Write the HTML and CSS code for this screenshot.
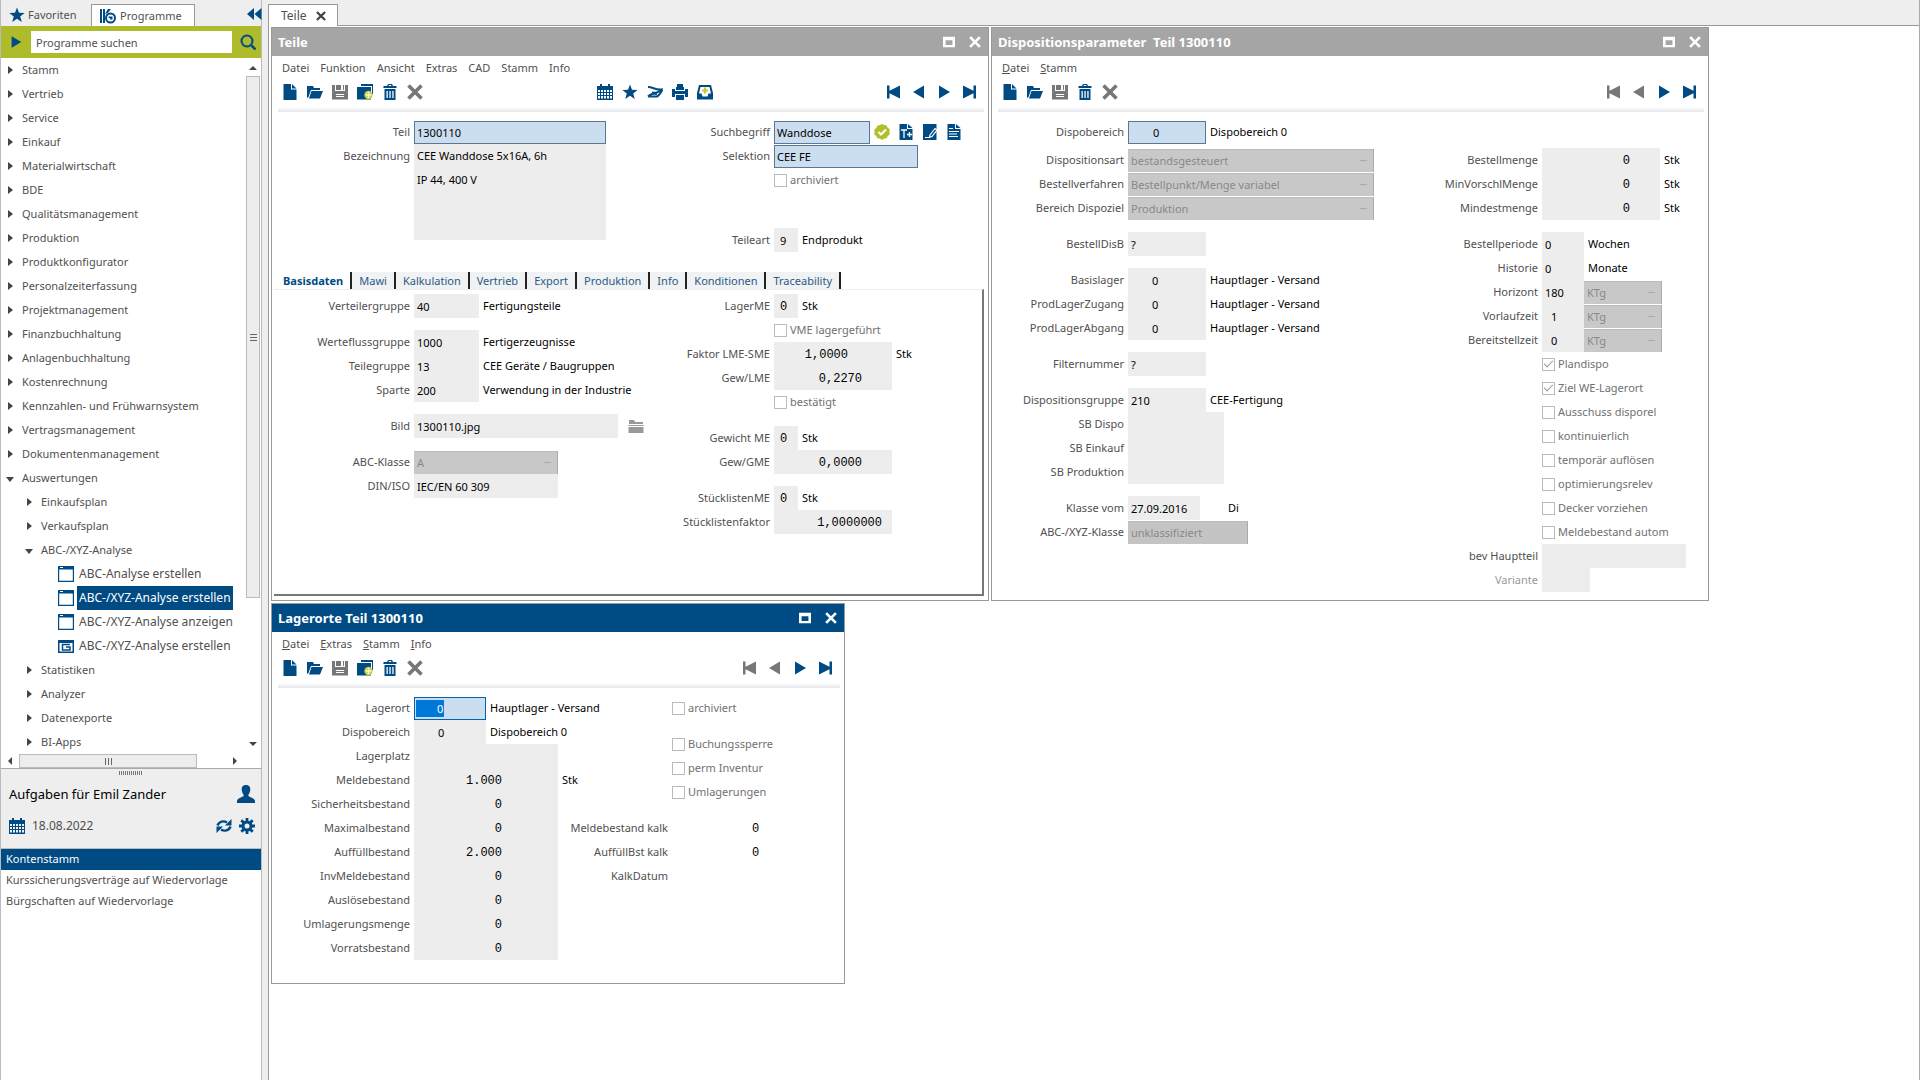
FILE: index.html
```html
<!DOCTYPE html>
<html lang="de">
<head>
<meta charset="utf-8">
<title>Teile</title>
<link rel="stylesheet" href="styles.css">
</head>
<body>
<svg class="sprite" aria-hidden="true">
  <symbol id="star" viewBox="0 0 16 16"><path d="M8 0.5l2 5.3 5.6.1-4.4 3.5 1.6 5.6L8 11.8 3.2 15l1.6-5.6L.4 5.9 6 5.8z"/></symbol>
  <symbol id="logo" viewBox="0 0 16 16"><path d="M0 1h2v14H0zM3 1h2v14H3zM5 6l3-5h3L8 5z"/><circle cx="10.500" cy="10" r="4.500" fill="none" stroke="currentColor" stroke-width="2"/><path d="M8.500 8.500h4v3h-2.500v-1.500H8.500z"/></symbol>
  <symbol id="rewind" viewBox="0 0 16 16"><path d="M8 2v12L1 8zM15.500 2v12l-7-6z"/></symbol>
  <symbol id="search" viewBox="0 0 16 16"><path d="M11.500 11.500L15.500 15.500" stroke="currentColor" stroke-width="2.500"/><circle cx="7" cy="7" r="5.500" fill="none" stroke="currentColor" stroke-width="2"/></symbol>
  <symbol id="doc" viewBox="0 0 16 16"><path d="M1.500 0H9v5.500h5.500V16h-13zM10 0l4.500 4.500H10z"/></symbol>
  <symbol id="open" viewBox="0 0 16 16"><path d="M0 2h6l1 2h6v2H4L1.500 13 0 14zM4.500 7H16l-3 7.500H2z"/></symbol>
  <symbol id="save" viewBox="0 0 16 16"><path fill-rule="evenodd" d="M0 1h3v6h10V1h3v14.500H0zM4 10h8v1H4zM4 12h8v1H4zM4 1h5v5H4zM11 1h1v5h-1z"/></symbol>
  <symbol id="copy" viewBox="0 0 16 16"><path d="M4 0h12v10h-1V2H4zM0 3h14v12.500H0z"/><circle cx="11.500" cy="11" r="4.200" fill="#c9d24e"/><path d="M11.500 8v6M8.500 11h6" stroke="#f4f6c8" stroke-width="1.500"/></symbol>
  <symbol id="trash" viewBox="0 0 16 16"><path fill-rule="evenodd" d="M1.500 2H5l1-2h4l1 2h3.500v2h-13zM6.500 2h3L9 1H7zM2.500 5h11v11h-11zM4.500 7v7h1.300V7zM7.400 7v7h1.300V7zM10.300 7v7h1.300V7z"/></symbol>
  <symbol id="cross" viewBox="0 0 16 16"><path d="M1.500 1.500l13 13M14.500 1.500l-13 13" stroke="currentColor" stroke-width="3.600"/></symbol>
  <symbol id="calendar" viewBox="0 0 16 16"><path fill-rule="evenodd" d="M0 2h3V0h2v2h6V0h2v2h3v14H0zM1 6v2h2V6zM4 6v2h2V6zM7 6v2h2V6zM10 6v2h2V6zM13 6v2h2V6zM1 9v2h2V9zM4 9v2h2V9zM7 9v2h2V9zM10 9v2h2V9zM13 9v2h2V9zM1 12v2.500h2V12zM4 12v2.500h2V12zM7 12v2.500h2V12zM10 12v2.500h2V12zM13 12v2.500h2V12z"/></symbol>
  <symbol id="flow" viewBox="0 0 16 16"><path d="M1 3c5 0 7 3 13 2.500C11 9 9 9 5 8.500M1 12.500h9c2-1 4-4 5.500-7M1 12.500c3-3 5-3 9-2.500" fill="none" stroke="currentColor" stroke-width="2"/></symbol>
  <symbol id="print" viewBox="0 0 16 16"><path d="M4 3h1V0h6v3h1v3H4zM0 5h3v2h10V5h3v8h-3v-3H3v3H0zM4 11h8v5H4z"/></symbol>
  <symbol id="inbox" viewBox="0 0 16 16"><path fill-rule="evenodd" d="M2 1h12l2 8v6.500H0V9zM3.500 3L2 9.500h2.500l1 3h5l1-3H14L12.500 3z"/><path d="M8 3.500v6M5 6.500h6" stroke="#c0ca3a" stroke-width="2"/></symbol>
  <symbol id="first" viewBox="0 0 16 16"><path d="M1 1.500h2.500v5.200L14 1.500v13L3.500 9.300v5.200H1z"/></symbol>
  <symbol id="prev" viewBox="0 0 16 16"><path d="M13 1.500v13L2 8z"/></symbol>
  <symbol id="next" viewBox="0 0 16 16"><path d="M3 1.500v13L14 8z"/></symbol>
  <symbol id="last" viewBox="0 0 16 16"><path d="M15 1.500h-2.500v5.200L2 1.500v13l10.500-5.200v5.200H15z"/></symbol>
  <symbol id="badge" viewBox="0 0 16 16"><path d="M8 0l2 1 2.500.3 1 2.200L15.500 5v3l.2 2.500-2 1.500-1 2.200-2.500.3L8 16l-2.200-1.500-2.500-.3-1-2.200-2-1.500L.5 8 .3 5.500l2-1.500 1-2.300L6 1z"/><path d="M4.500 8l2.500 2.500 5-5" fill="none" stroke="#fff" stroke-width="2"/></symbol>
  <symbol id="doctext" viewBox="0 0 16 16"><path d="M1.500 0H9v5h5.500v11h-13zM10 0l4.500 4H10z"/><path d="M3 6h6M6 6v8M9 10.500h5M11.500 8v5" stroke="#fff" stroke-width="1.300"/></symbol>
  <symbol id="edit" viewBox="0 0 16 16"><path d="M1 0h13.500v16H1z"/><path d="M8 11l5-6.500 2 1.500-5 6.500-2.500.8zM3 13.500h4" fill="none" stroke="#fff" stroke-width="1.200"/></symbol>
  <symbol id="doclines" viewBox="0 0 16 16"><path d="M1.500 0H9v5h5.500v11h-13zM10 0l4.500 4H10z"/><path d="M3 4.500h4M3 7.500h10M3 10h8M3 12.500h9" stroke="#fff"/></symbol>
  <symbol id="folder" viewBox="0 0 16 16"><path d="M1 2h5l1 2h8v2H1zM0 7h16l-.5 1H.5zM.5 9h15v6H.5z"/></symbol>
  <symbol id="win" viewBox="0 0 16 16"><path fill-rule="evenodd" d="M0 0h16v16H0zM1.200 3.500v11.300h13.600V3.500z"/><path d="M2 1.500h3" stroke="#fff"/></symbol>
  <symbol id="winplus" viewBox="0 0 16 16"><path fill-rule="evenodd" d="M0 2h16v13H0zM1.500 5v8.500h13V5z"/><path d="M12 6.500H4.500V12H12V9H8" fill="none" stroke="currentColor" stroke-width="1.500"/></symbol>
  <symbol id="user" viewBox="0 0 16 16"><path d="M8 0c3 0 4 2 3.800 4.500C11.600 7 10.500 8 10 9c0 2 5 1.500 6 5v2H0v-2c1-3.500 6-3 6-5-.5-1-1.600-2-1.800-4.500C4 2 5 0 8 0z"/></symbol>
  <symbol id="refresh" viewBox="0 0 16 16"><path d="M1.500 7.500C3 3 8 2.500 11 4.500M14.500 8.500C13 13 8 13.500 5 11.500" fill="none" stroke="currentColor" stroke-width="2.400"/><path d="M15.500 1v6.500H9zM.5 15V8.500H7z"/></symbol>
  <symbol id="gear" viewBox="0 0 16 16"><path d="M8 0v16M0 8h16M2.300 2.300l11.400 11.400M13.700 2.300L2.300 13.700" stroke="currentColor" stroke-width="2.800"/><circle cx="8" cy="8" r="4" fill="none" stroke="currentColor" stroke-width="3"/><circle cx="8" cy="8" r="2.500" fill="#eee"/></symbol>
  <symbol id="max" viewBox="0 0 14 14"><path fill-rule="evenodd" d="M0 1h14v12H0zM3 5v5.500h8V5z"/></symbol>
</svg>

<div class="app">
  <aside class="sidebar">
    <div class="side-tabs">
      <button class="side-tab"><svg class="ico"><use href="#star"/></svg>Favoriten</button>
      <button class="side-tab active"><svg class="ico"><use href="#logo"/></svg>Programme</button>
      <button class="collapse" aria-label="Einklappen"><svg class="ico"><use href="#rewind"/></svg></button>
    </div>
    <form class="search">
      <button type="button" aria-label="Start"><svg class="ico s14"><use href="#next"/></svg></button>
      <input type="text" aria-label="Programme suchen" placeholder="Programme suchen">
      <button type="button" aria-label="Suchen"><svg class="ico"><use href="#search"/></svg></button>
    </form>
    <div class="tree-box">
      <ul class="tree">
        <li>Stamm</li>
        <li>Vertrieb</li>
        <li>Service</li>
        <li>Einkauf</li>
        <li>Materialwirtschaft</li>
        <li>BDE</li>
        <li>Qualitätsmanagement</li>
        <li>Produktion</li>
        <li>Produktkonfigurator</li>
        <li>Personalzeiterfassung</li>
        <li>Projektmanagement</li>
        <li>Finanzbuchhaltung</li>
        <li>Anlagenbuchhaltung</li>
        <li>Kostenrechnung</li>
        <li>Kennzahlen- und Frühwarnsystem</li>
        <li>Vertragsmanagement</li>
        <li>Dokumentenmanagement</li>
        <li class="expanded">Auswertungen
          <ul>
            <li>Einkaufsplan</li>
            <li>Verkaufsplan</li>
            <li class="expanded">ABC-/XYZ-Analyse
              <ul class="leaves">
                <li><svg class="ico"><use href="#win"/></svg><span>ABC-Analyse erstellen</span></li>
                <li><svg class="ico"><use href="#win"/></svg><span class="selected">ABC-/XYZ-Analyse erstellen</span></li>
                <li><svg class="ico"><use href="#win"/></svg><span>ABC-/XYZ-Analyse anzeigen</span></li>
                <li><svg class="ico"><use href="#winplus"/></svg><span>ABC-/XYZ-Analyse erstellen</span></li>
              </ul>
            </li>
            <li>Statistiken</li>
            <li>Analyzer</li>
            <li>Datenexporte</li>
            <li>BI-Apps</li>
          </ul>
        </li>
      </ul>
      <div class="vscroll"><i class="up"></i><div class="thumb"><i class="grip"></i></div><i class="down"></i></div>
    </div>
    <div class="hscroll"><i class="left"></i><div class="thumb"><i class="grip"></i></div><i class="right"></i></div>
    <div class="splitter"><i></i></div>
    <section class="tasks">
      <header><h2>Aufgaben für Emil Zander</h2><svg class="ico s18"><use href="#user"/></svg></header>
      <div class="date"><svg class="ico"><use href="#calendar"/></svg><time>18.08.2022</time>
        <button aria-label="Aktualisieren"><svg class="ico"><use href="#refresh"/></svg></button>
        <button aria-label="Einstellungen"><svg class="ico"><use href="#gear"/></svg></button></div>
    </section>
    <ul class="task-list">
      <li class="selected">Kontenstamm</li>
      <li>Kurssicherungsverträge auf Wiedervorlage</li>
      <li>Bürgschaften auf Wiedervorlage</li>
    </ul>
  </aside>

  <main class="workspace">
    <div class="main-tabs"><button class="main-tab">Teile <svg class="ico s10"><use href="#cross"/></svg></button></div>
    <div class="desktop">

      <section class="window w-teile">
        <header class="titlebar"><h1>Teile</h1><button aria-label="Maximieren"><svg class="ico s14"><use href="#max"/></svg></button><button aria-label="Schließen"><svg class="ico s14"><use href="#cross"/></svg></button></header>
        <nav class="menu"><button>Datei</button><button>Funktion</button><button>Ansicht</button><button>Extras</button><button>CAD</button><button>Stamm</button><button>Info</button></nav>
        <div class="toolbar">
          <div class="tools">
            <button aria-label="Neu"><svg class="ico"><use href="#doc"/></svg></button>
            <button aria-label="Öffnen"><svg class="ico"><use href="#open"/></svg></button>
            <button aria-label="Speichern" disabled><svg class="ico"><use href="#save"/></svg></button>
            <button aria-label="Kopieren"><svg class="ico"><use href="#copy"/></svg></button>
            <button aria-label="Löschen"><svg class="ico"><use href="#trash"/></svg></button>
            <button aria-label="Abbrechen" disabled><svg class="ico"><use href="#cross"/></svg></button>
          </div>
          <div class="tools">
            <button aria-label="Kalender"><svg class="ico"><use href="#calendar"/></svg></button>
            <button aria-label="Favorit"><svg class="ico"><use href="#star"/></svg></button>
            <button aria-label="Workflow"><svg class="ico"><use href="#flow"/></svg></button>
            <button aria-label="Drucken"><svg class="ico"><use href="#print"/></svg></button>
            <button aria-label="Ablage"><svg class="ico"><use href="#inbox"/></svg></button>
          </div>
          <div class="tools">
            <button aria-label="Erster"><svg class="ico"><use href="#first"/></svg></button>
            <button aria-label="Voriger"><svg class="ico"><use href="#prev"/></svg></button>
            <button aria-label="Nächster"><svg class="ico"><use href="#next"/></svg></button>
            <button aria-label="Letzter"><svg class="ico"><use href="#last"/></svg></button>
          </div>
        </div>
        <div class="form head">
          <div class="col">
            <div class="row"><label for="teil">Teil</label><input id="teil" class="key f192" value="1300110"></div>
            <div class="row tall"><label for="bez">Bezeichnung</label><textarea id="bez" class="f192" readonly>CEE Wanddose 5x16A, 6h
IP 44, 400 V</textarea></div>
          </div>
          <div class="col">
            <div class="row"><label for="such">Suchbegriff</label><input id="such" class="key f96" value="Wanddose"><span class="field-icons"><svg class="ico lime"><use href="#badge"/></svg><svg class="ico"><use href="#doctext"/></svg><svg class="ico"><use href="#edit"/></svg><svg class="ico"><use href="#doclines"/></svg></span></div>
            <div class="row"><label for="sel">Selektion</label><input id="sel" class="key f144" value="CEE FE"></div>
            <div class="row check"><input type="checkbox" id="arch" disabled><label for="arch">archiviert</label></div>
            <div class="row after-empty"><label for="art">Teileart</label><input id="art" class="f24" value="9" readonly><output>Endprodukt</output></div>
          </div>
        </div>
        <div class="tabs" role="tablist">
          <button role="tab" aria-selected="true">Basisdaten</button><button role="tab">Mawi</button><button role="tab">Kalkulation</button><button role="tab">Vertrieb</button><button role="tab">Export</button><button role="tab">Produktion</button><button role="tab">Info</button><button role="tab">Konditionen</button><button role="tab">Traceability</button>
        </div>
        <div class="form tab-panel">
          <div class="col">
            <div class="row"><label for="vg">Verteilergruppe</label><input id="vg" class="f64" value="40" readonly><output>Fertigungsteile</output></div>
            <div class="row gap"><label for="wg">Werteflussgruppe</label><input id="wg" class="f64" value="1000" readonly><output>Fertigerzeugnisse</output></div>
            <div class="row"><label for="tg">Teilegruppe</label><input id="tg" class="f64" value="13" readonly><output>CEE Geräte / Baugruppen</output></div>
            <div class="row"><label for="sp">Sparte</label><input id="sp" class="f64" value="200" readonly><output>Verwendung in der Industrie</output></div>
            <div class="row gap"><label for="bild">Bild</label><input id="bild" class="f204" value="1300110.jpg" readonly><button class="browse" aria-label="Bild wählen" disabled><svg class="ico"><use href="#folder"/></svg></button></div>
            <div class="row gap"><label for="abc">ABC-Klasse</label><select id="abc" class="f144" disabled><option>A</option></select></div>
            <div class="row"><label for="din">DIN/ISO</label><input id="din" class="f144" value="IEC/EN 60 309" readonly></div>
          </div>
          <div class="col">
            <div class="row"><label for="lme">LagerME</label><input id="lme" class="f24 mono" value="0" readonly><output>Stk</output></div>
            <div class="row check"><input type="checkbox" id="vme" disabled><label for="vme">VME lagergeführt</label></div>
            <div class="row"><label for="fak">Faktor LME-SME</label><input id="fak" class="f118 mono num in44" value="1,0000" readonly><output>Stk</output></div>
            <div class="row"><label for="glme">Gew/LME</label><input id="glme" class="f118 mono num in30" value="0,2270" readonly></div>
            <div class="row check"><input type="checkbox" id="best" disabled><label for="best">bestätigt</label></div>
            <div class="row gap"><label for="gme">Gewicht ME</label><input id="gme" class="f24 mono" value="0" readonly><output>Stk</output></div>
            <div class="row"><label for="ggme">Gew/GME</label><input id="ggme" class="f118 mono num in30" value="0,0000" readonly></div>
            <div class="row gap"><label for="sme">StücklistenME</label><input id="sme" class="f24 mono" value="0" readonly><output>Stk</output></div>
            <div class="row"><label for="sfak">Stücklistenfaktor</label><input id="sfak" class="f118 mono num in8" value="1,0000000" readonly></div>
          </div>
        </div>
      </section>

      <section class="window w-dispo">
        <header class="titlebar"><h1>Dispositionsparameter&nbsp; Teil 1300110</h1><button aria-label="Maximieren"><svg class="ico s14"><use href="#max"/></svg></button><button aria-label="Schließen"><svg class="ico s14"><use href="#cross"/></svg></button></header>
        <nav class="menu"><button><u>D</u>atei</button><button><u>S</u>tamm</button></nav>
        <div class="toolbar">
          <div class="tools">
            <button aria-label="Neu"><svg class="ico"><use href="#doc"/></svg></button>
            <button aria-label="Öffnen"><svg class="ico"><use href="#open"/></svg></button>
            <button aria-label="Speichern" disabled><svg class="ico"><use href="#save"/></svg></button>
            <button aria-label="Löschen"><svg class="ico"><use href="#trash"/></svg></button>
            <button aria-label="Abbrechen" disabled><svg class="ico"><use href="#cross"/></svg></button>
          </div>
          <div class="tools">
            <button aria-label="Erster" disabled><svg class="ico"><use href="#first"/></svg></button>
            <button aria-label="Voriger" disabled><svg class="ico"><use href="#prev"/></svg></button>
            <button aria-label="Nächster"><svg class="ico"><use href="#next"/></svg></button>
            <button aria-label="Letzter"><svg class="ico"><use href="#last"/></svg></button>
          </div>
        </div>
        <div class="form">
          <div class="col">
            <div class="row"><label for="db">Dispobereich</label><input id="db" class="key f78 lead" value="0"><output>Dispobereich 0</output></div>
            <div class="row nudge"><label for="da">Dispositionsart</label><select id="da" class="f246" disabled><option>bestandsgesteuert</option></select></div>
            <div class="row"><label for="bv">Bestellverfahren</label><select id="bv" class="f246" disabled><option>Bestellpunkt/Menge variabel</option></select></div>
            <div class="row"><label for="bd">Bereich Dispoziel</label><select id="bd" class="f246" disabled><option>Produktion</option></select></div>
            <div class="row gap"><label for="bdb">BestellDisB</label><input id="bdb" class="f78" value="?" readonly></div>
            <div class="row gap"><label for="bl">Basislager</label><input id="bl" class="f78 lead" value="0" readonly><output>Hauptlager - Versand</output></div>
            <div class="row"><label for="plz">ProdLagerZugang</label><input id="plz" class="f78 lead" value="0" readonly><output>Hauptlager - Versand</output></div>
            <div class="row"><label for="pla">ProdLagerAbgang</label><input id="pla" class="f78 lead" value="0" readonly><output>Hauptlager - Versand</output></div>
            <div class="row gap"><label for="fn">Filternummer</label><input id="fn" class="f78" value="?" readonly></div>
            <div class="row gap"><label for="dg">Dispositionsgruppe</label><input id="dg" class="f78" value="210" readonly><output>CEE-Fertigung</output></div>
            <div class="row"><label for="sbd">SB Dispo</label><input id="sbd" class="f96" readonly></div>
            <div class="row"><label for="sbe">SB Einkauf</label><input id="sbe" class="f96" readonly></div>
            <div class="row"><label for="sbp">SB Produktion</label><input id="sbp" class="f96" readonly></div>
            <div class="row gap"><label for="kv">Klasse vom</label><input id="kv" class="f72" value="27.09.2016" readonly><output class="far">Di</output></div>
            <div class="row"><label for="axk">ABC-/XYZ-Klasse</label><select id="axk" class="f120 plain" disabled><option>unklassifiziert</option></select></div>
          </div>
          <div class="col below-first">
            <div class="row"><label for="bm">Bestellmenge</label><input id="bm" class="f118 mono num in30" value="0" readonly><output>Stk</output></div>
            <div class="row"><label for="mvm">MinVorschlMenge</label><input id="mvm" class="f118 mono num in30" value="0" readonly><output>Stk</output></div>
            <div class="row"><label for="mm">Mindestmenge</label><input id="mm" class="f118 mono num in30" value="0" readonly><output>Stk</output></div>
            <div class="row gap"><label for="bp">Bestellperiode</label><input id="bp" class="f42" value="0" readonly><output>Wochen</output></div>
            <div class="row"><label for="hi">Historie</label><input id="hi" class="f42" value="0" readonly><output>Monate</output></div>
            <div class="row"><label for="ho">Horizont</label><input id="ho" class="f42" value="180" readonly><select class="f78 unit" aria-label="Einheit Horizont" disabled><option>KTg</option></select></div>
            <div class="row"><label for="vz">Vorlaufzeit</label><input id="vz" class="f42 indent" value="1" readonly><select class="f78 unit" aria-label="Einheit Vorlaufzeit" disabled><option>KTg</option></select></div>
            <div class="row"><label for="bz">Bereitstellzeit</label><input id="bz" class="f42 indent" value="0" readonly><select class="f78 unit" aria-label="Einheit Bereitstellzeit" disabled><option>KTg</option></select></div>
            <div class="row check"><input type="checkbox" id="c1" checked disabled><label for="c1">Plandispo</label></div>
            <div class="row check"><input type="checkbox" id="c2" checked disabled><label for="c2">Ziel WE-Lagerort</label></div>
            <div class="row check"><input type="checkbox" id="c3" disabled><label for="c3">Ausschuss disporel</label></div>
            <div class="row check"><input type="checkbox" id="c4" disabled><label for="c4">kontinuierlich</label></div>
            <div class="row check"><input type="checkbox" id="c5" disabled><label for="c5">temporär auflösen</label></div>
            <div class="row check"><input type="checkbox" id="c6" disabled><label for="c6">optimierungsrelev</label></div>
            <div class="row check"><input type="checkbox" id="c7" disabled><label for="c7">Decker vorziehen</label></div>
            <div class="row check"><input type="checkbox" id="c8" disabled><label for="c8">Meldebestand autom</label></div>
            <div class="row"><label for="bh">bev Hauptteil</label><input id="bh" class="f144" readonly></div>
            <div class="row"><label for="va" class="dim">Variante</label><input id="va" class="f48" readonly></div>
          </div>
        </div>
      </section>

      <section class="window w-lager active">
        <header class="titlebar"><h1>Lagerorte Teil 1300110</h1><button aria-label="Maximieren"><svg class="ico s14"><use href="#max"/></svg></button><button aria-label="Schließen"><svg class="ico s14"><use href="#cross"/></svg></button></header>
        <nav class="menu"><button><u>D</u>atei</button><button><u>E</u>xtras</button><button><u>S</u>tamm</button><button><u>I</u>nfo</button></nav>
        <div class="toolbar">
          <div class="tools">
            <button aria-label="Neu"><svg class="ico"><use href="#doc"/></svg></button>
            <button aria-label="Öffnen"><svg class="ico"><use href="#open"/></svg></button>
            <button aria-label="Speichern" disabled><svg class="ico"><use href="#save"/></svg></button>
            <button aria-label="Kopieren"><svg class="ico"><use href="#copy"/></svg></button>
            <button aria-label="Löschen"><svg class="ico"><use href="#trash"/></svg></button>
            <button aria-label="Abbrechen" disabled><svg class="ico"><use href="#cross"/></svg></button>
          </div>
          <div class="tools">
            <button aria-label="Erster" disabled><svg class="ico"><use href="#first"/></svg></button>
            <button aria-label="Voriger" disabled><svg class="ico"><use href="#prev"/></svg></button>
            <button aria-label="Nächster"><svg class="ico"><use href="#next"/></svg></button>
            <button aria-label="Letzter"><svg class="ico"><use href="#last"/></svg></button>
          </div>
        </div>
        <div class="form">
          <div class="col">
            <div class="row"><label for="lo">Lagerort</label><input id="lo" class="key focus f72" value="0"><output>Hauptlager - Versand</output></div>
            <div class="row"><label for="ldb">Dispobereich</label><input id="ldb" class="f72 lead" value="0" readonly><output>Dispobereich 0</output></div>
            <div class="row"><label for="lp">Lagerplatz</label><input id="lp" class="f144" readonly></div>
            <div class="row"><label for="mb">Meldebestand</label><input id="mb" class="f144 mono num in54" value="1.000" readonly><output>Stk</output></div>
            <div class="row"><label for="sb">Sicherheitsbestand</label><input id="sb" class="f144 mono num in54" value="0" readonly></div>
            <div class="row"><label for="mxb">Maximalbestand</label><input id="mxb" class="f144 mono num in54" value="0" readonly></div>
            <div class="row"><label for="ab">Auffüllbestand</label><input id="ab" class="f144 mono num in54" value="2.000" readonly></div>
            <div class="row"><label for="imb">InvMeldebestand</label><input id="imb" class="f144 mono num in54" value="0" readonly></div>
            <div class="row"><label for="alb">Auslösebestand</label><input id="alb" class="f144 mono num in54" value="0" readonly></div>
            <div class="row"><label for="um">Umlagerungsmenge</label><input id="um" class="f144 mono num in54" value="0" readonly></div>
            <div class="row"><label for="vb">Vorratsbestand</label><input id="vb" class="f144 mono num in54" value="0" readonly></div>
          </div>
          <div class="col">
            <div class="row check"><input type="checkbox" id="l1" disabled><label for="l1">archiviert</label></div>
            <div class="row check gap"><input type="checkbox" id="l2" disabled><label for="l2">Buchungssperre</label></div>
            <div class="row check"><input type="checkbox" id="l3" disabled><label for="l3">perm Inventur</label></div>
            <div class="row check"><input type="checkbox" id="l4" disabled><label for="l4">Umlagerungen</label></div>
            <div class="row gap"><label for="mk">Meldebestand kalk</label><output id="mk" class="mono calc">0</output></div>
            <div class="row"><label for="ak">AuffüllBst kalk</label><output id="ak" class="mono calc">0</output></div>
            <div class="row"><label for="kd">KalkDatum</label><output id="kd" class="calc"></output></div>
          </div>
        </div>
      </section>
    </div>
  </main>
</div>
</body>
</html>
```

FILE: styles.css
```css
* { box-sizing: border-box; }
body { margin: 0; background: #eee; color: #000; font: 11px/16px "Noto Sans", "Open Sans", sans-serif; }
button, input, select, textarea { font: inherit; color: inherit; margin: 0; }
button { background: none; border: 0; padding: 0; display: flex; align-items: center; white-space: nowrap; }
ul { list-style: none; margin: 0; padding: 0; }
h1, h2 { margin: 0; }
.sprite { display: none; }
.ico { width: 16px; height: 16px; fill: currentColor; color: #004b84; flex: none; display: block; }
.s10 { width: 10px; height: 10px; color: #444; }
.s14 { width: 14px; height: 14px; }
.s18 { width: 18px; height: 18px; }
.lime { color: #b2bf2c; }

.app { display: flex; min-height: 100vh; }

/* Sidebar */
.sidebar { width: 262px; margin-right: 6px; flex: none; display: flex; flex-direction: column; border-left: 1px solid #bbb; border-right: 1px solid #bbb; color: #505050; }
.side-tabs { display: flex; align-items: flex-end; height: 26px; }
.side-tab { height: 22px; gap: 3px; padding: 0 7px 0 8px; width: 90px; }
.side-tab.active { background: #fff; width: 104px; gap: 4px; border: 1px solid #999; border-bottom: 0; }
.collapse { margin: 0 -1px 4px auto; }
.search { display: flex; align-items: center; height: 32px; padding: 0 5px 0 8px; gap: 8px; background: #aebb2b; }
.search input { flex: 1; min-width: 0; height: 22px; border: 0; padding: 0 5px; background: #fff; }
.search input::placeholder { color: #505050; opacity: 1; }
.tree-box { display: flex; background: #fff; }
.tree { flex: 1; line-height: 24px; white-space: nowrap; }
.tree li { padding-left: 21px; }
.tree li::before { content: ""; display: inline-block; width: 0; margin-left: -14px; margin-right: 9px; border: 4px solid transparent; border-left: 5px solid #444; border-right: 0; }
.tree li.expanded::before { border: 4px solid transparent; border-top: 5px solid #444; border-bottom: 0; margin-left: -16px; margin-right: 8px; vertical-align: middle; }
.tree ul { margin-left: -2px; }
.tree .leaves { margin-left: -4px; font-size: 12px; }
.tree .leaves li { display: flex; align-items: center; gap: 3px; padding-left: 21px; height: 24px; }
.tree .leaves li::before { display: none; }
.tree .leaves span { padding: 0 2px; }
.selected { background: #004b84; color: #fff; }
.vscroll { width: 16px; display: flex; flex-direction: column; align-items: center; padding: 8px 0; }
.vscroll .thumb { flex: none; width: 14px; height: 522px; margin-top: 6px; }
.thumb { background: #ededed; border: 1px solid #bbb; display: flex; align-items: center; justify-content: center; }
.up, .down, .left, .right { border: 4px solid transparent; }
.up { border-bottom-color: #444; border-top: 0; }
.down { border-top-color: #444; border-bottom: 0; margin-top: auto; }
.left { border-right-color: #444; border-left: 0; }
.right { border-left-color: #444; border-right: 0; }
.grip { width: 7px; height: 7px; background: repeating-linear-gradient(#666 0 1px, transparent 1px 3px); }
.hscroll { display: flex; align-items: center; height: 14px; padding: 0 24px 0 7px; background: #fff; }
.hscroll .thumb { width: 178px; height: 14px; margin: 0 auto 0 7px; }
.hscroll .grip { background: repeating-linear-gradient(90deg, #666 0 1px, transparent 1px 3px); }
.splitter { border-top: 1px solid #aaa; height: 9px; display: flex; align-items: center; justify-content: center; }
.splitter i { width: 24px; height: 4px; background: repeating-linear-gradient(90deg, #777 0 1px, transparent 1px 2px); }
.tasks { padding: 0 6px 0 8px; height: 71px; }
.tasks header { display: flex; align-items: center; justify-content: space-between; height: 33px; color: #000; }
.tasks h2 { font-size: 13px; font-weight: 400; }
.date { display: flex; align-items: center; gap: 7px; height: 32px; font-size: 12px; }
.date time { margin-right: auto; }
.task-list { flex: 1; background: #fff; border-top: 1px solid #bbb; }
.task-list li { height: 21px; line-height: 20px; padding-left: 5px; }

/* Workspace */
.workspace { flex: 1; min-width: 0; display: flex; flex-direction: column; border-right: 1px solid #aaa; }
.main-tabs { height: 26px; padding-top: 4px; border-bottom: 1px solid #999; }
.main-tab { width: 70px; height: 22px; padding-left: 12px; gap: 9px; background: #fff; border: 1px solid #999; border-bottom: 0; color: #505050; font-size: 12px; }
.desktop { flex: 1; display: grid; grid-template-columns: 718px 718px; align-content: start; gap: 2px; padding: 1px 0 0 2px; background: #fff; border-left: 1px solid #999; }
.window { border: 1px solid #999; background: #fff; display: flex; flex-direction: column; padding-bottom: 4px; }
.titlebar { display: flex; align-items: center; gap: 14px; height: 28px; padding: 0 7px 0 6px; background: #a5a5a5; color: #fff; }
.titlebar h1 { font-size: 13px; font-weight: 700; margin-right: auto; }
.titlebar .ico { color: #fff; }
.titlebar .s14 { width: 12px; height: 12px; }
.active .titlebar { background: #004b84; }
.menu { display: flex; gap: 11px; height: 24px; padding-left: 10px; color: #505050; }
.toolbar { display: flex; justify-content: space-between; height: 32px; margin: 0 4px 8px 6px; padding: 2px 7px 0 4px; background: linear-gradient(#fff, #e4e6ea) no-repeat bottom / 100% 5px; }
.tools { display: flex; gap: 9px; height: 20px; align-items: center; }
button:disabled .ico { color: #777; }

/* Forms: 24px rows, label column on the left */
.form { display: flex; align-items: flex-start; }
.row { display: flex; align-items: center; gap: 4px; height: 24px; white-space: nowrap; }
.row label { width: var(--label); flex: none; text-align: right; color: #505050; }
.row.gap { margin-top: 12px; }
.row.nudge { margin-top: 4px; }
.row.after-empty { margin-top: 36px; }
.row.tall { height: 96px; align-items: flex-start; line-height: 24px; }
.row.check { padding-left: calc(var(--label) + 4px); gap: 3px; }
.row.check label { width: auto; color: #707070; }
.row .dim { color: #999; }
.w-teile .col { --label: 138px; width: 380px; }
.w-teile .col + .col { --label: 118px; width: auto; }
.w-dispo .col { --label: 132px; width: 400px; }
.w-dispo .col + .col { --label: 146px; width: auto; }
.w-lager { width: 574px; }
.w-lager .col { --label: 138px; width: 290px; padding-bottom: 19px; }
.w-lager .col + .col { --label: 106px; width: auto; }
.below-first { padding-top: 28px; }
.head { height: 144px; }

input, textarea, select { border: 0; border-radius: 0; background: #ededed; height: 24px; padding: 0 3px; flex: none; outline: 0; }
textarea { height: 96px; line-height: 24px; resize: none; overflow: hidden; }
.key { height: 23px; padding: 0 2px; background: #cbdef0; border: 1px solid #5a7796; }
.focus { border-color: #0063b1; background: linear-gradient(#0078d7, #0078d7) no-repeat 1px 2px / 28px 17px #cbdef0; color: #fff; padding-left: 22px; }
.lead { padding-left: 24px; }
.indent { padding-left: 9px; }
.f24 { width: 24px; padding-left: 6px; }
.f42 { width: 42px; }
.f48 { width: 48px; }
.f64 { width: 65px; }
.f72 { width: 72px; }
.f78 { width: 78px; }
.f96 { width: 96px; }
.f118 { width: 118px; }
.f120 { width: 120px; }
.f144 { width: 144px; }
.f192 { width: 192px; }
.f204 { width: 204px; }
.f246 { width: 246px; }
.mono { font-family: "Liberation Mono", monospace; font-size: 12px; padding-top: 2px; }
.num { text-align: right; }
.in8 { padding-right: 10px; }
.in30 { padding-right: 30px; }
.in44 { padding-right: 44px; }
.in54 { padding-right: 56px; }
.far { margin-left: 24px; }
.calc { margin-left: 80px; }
select { appearance: none; height: 23px; background: linear-gradient(#aaa, #aaa) no-repeat right 6px center / 7px 1px #c8c8c8; color: #888; opacity: 1; border-right: 1px solid #aaa; border-top: 1px solid #bbb; }
select.plain { background: #c4c4c4; }
select.unit { margin-left: -4px; }
input[type=checkbox] { appearance: none; width: 13px; height: 13px; padding: 0; background: #fff; border: 1px solid #bbb; display: grid; place-items: center; }
input[type=checkbox]:checked::before { content: ""; width: 8px; height: 4px; border: solid #999; border-width: 0 0 1px 1px; transform: rotate(-45deg); margin-bottom: 3px; }
.field-icons { display: flex; gap: 8px; }
.browse { margin-left: 6px; }
.browse:disabled .ico { color: #999; }

/* Tabs */
.tabs { display: flex; height: 17px; padding-left: 4px; margin-top: 8px; }
.tabs button { padding: 0 7px; color: #2b5a85; background: #f0f2f4; border-right: 2px solid #222; }
.tabs [aria-selected=true] { font-weight: 700; color: #004b84; background: none; }
.tab-panel { margin: 0 4px 0 2px; padding-top: 4px; min-height: 307px; border-right: 2px solid #777; border-bottom: 2px solid #777; border-top: 1px solid #eee; }
.tab-panel .col { margin-left: -2px; }
.tab-panel .col + .col { margin-left: 0; }
```
